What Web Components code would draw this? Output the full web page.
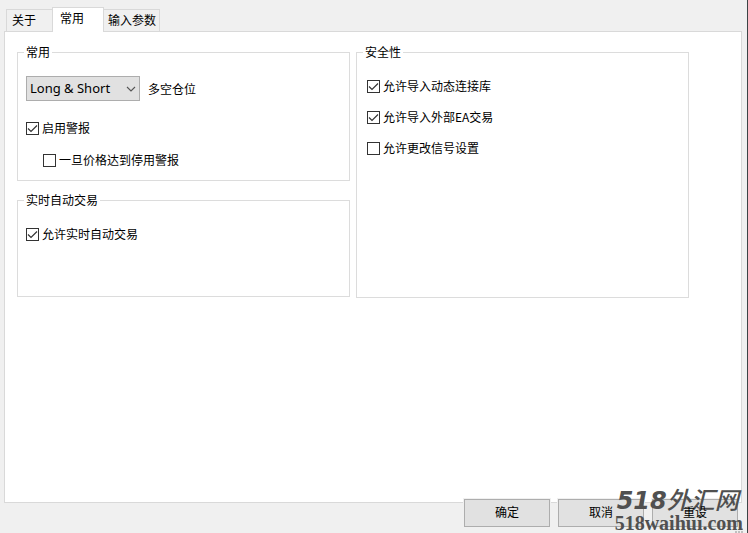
<!DOCTYPE html>
<html lang="zh-CN">
<head>
<meta charset="utf-8">
<title>EA</title>
<style>
  body {
    margin: 0;
    background: #f0f0f0;
    color: #000;
    font: 12px/16px "Noto Sans CJK SC", sans-serif;
  }
</style>
</head>
<body>
<ea-dialog>
  <tab-strip slot="tabs">
    <tab-item>关于</tab-item>
    <tab-item active>常用</tab-item>
    <tab-item>输入参数</tab-item>
  </tab-strip>

  <group-box slot="left" label="常用" class="common">
    <combo-box label="多空仓位" value="Long &amp; Short"></combo-box>
    <check-item checked>启用警报</check-item>
    <check-item nested>一旦价格达到停用警报</check-item>
  </group-box>
  <group-box slot="left" label="实时自动交易" class="live">
    <check-item checked>允许实时自动交易</check-item>
  </group-box>
  <group-box slot="right" label="安全性" class="safety">
    <check-item checked>允许导入动态连接库</check-item>
    <check-item checked>允许导入外部EA交易</check-item>
    <check-item>允许更改信号设置</check-item>
  </group-box>

  <push-button slot="buttons">确定</push-button>
  <push-button slot="buttons">取消</push-button>
  <push-button slot="buttons">重设</push-button>
  <site-mark slot="mark"></site-mark>
</ea-dialog>

<script>
// every element only fills its own open shadow root
class BaseElement extends HTMLElement {
  constructor() {
    super();
    this.attachShadow({ mode: "open" });
  }

  connectedCallback() {
    this.shadowRoot.innerHTML = this.template();
  }
}

class EaDialog extends BaseElement {
  template() {
    return `
      <style>
        :host {
          display: flex;
          flex-direction: column;
          position: relative;
          box-sizing: border-box;
          min-height: 100vh;
          border-right: 1px solid #3c4446;
        }
        main {
          flex: 1;
          display: grid;
          grid-template-columns: 1fr 1fr;
          align-items: start;
          gap: 6px;
          margin: 0 5px 0 4px;
          padding: 12px 52px 20px 12px;
          background: #fff;
          border: 1px solid #d9d9d9;
        }
        .col {
          display: flex;
          flex-direction: column;
          gap: 11px;
        }
        /* the buttons rise over the lower edge of the page */
        footer {
          display: flex;
          justify-content: flex-end;
          gap: 8px;
          margin-top: -4px;
          padding: 0 9px 6px;
        }
        .grip {
          position: absolute;
          right: 4px;
          bottom: 0;
        }
      </style>
      <slot name="tabs"></slot>
      <main>
        <div class="col"><slot name="left"></slot></div>
        <div class="col"><slot name="right"></slot></div>
      </main>
      <footer><slot name="buttons"></slot></footer>
      <svg class="grip" width="8" height="5" fill="#bfbfbf" aria-hidden="true">
        <path d="M6 0h2v2h-2zM3 3h2v2h-2zM6 3h2v2h-2zM0 3h2v2h-2z"/>
      </svg>
      <slot name="mark"></slot>
    `;
  }
}

class TabStrip extends BaseElement {
  template() {
    return `
      <style>
        :host {
          display: block;
          padding: 7px 6px 0;
        }
        div {
          display: flex;
          align-items: flex-end;
        }
      </style>
      <div role="tablist"><slot></slot></div>
    `;
  }
}

class TabItem extends BaseElement {
  template() {
    const active = this.hasAttribute("active");
    return `
      <style>
        :host { display: block; }
        :host([active]) { margin-bottom: -1px; }
        button {
          display: block;
          height: 22px;
          padding: 0 3px 2px 4px;
          border: 1px solid #d9d9d9;
          border-bottom: 0;
          background: #f0f0f0;
          color: inherit;
          font: inherit;
        }
        :host(:first-child) button {
          padding: 0 16px 2px 5px;
          border-right: 0;
        }
        :host(:last-child) button { border-left: 0; }
        :host([active]) button {
          position: relative;
          height: 25px;
          padding: 0 19px 4px 7px;
          background: #fff;
        }
      </style>
      <button type="button" role="tab" aria-selected="${active}"><slot></slot></button>
    `;
  }
}

class GroupBox extends BaseElement {
  template() {
    return `
      <style>
        :host { display: block; }
        fieldset {
          margin: 0;
          padding: 17px 8px 11px;
          border: 1px solid #dcdcdc;
          min-width: 0;
        }
        legend {
          margin-left: -2px;
          padding: 0 2px 2px;
          line-height: 15px;
        }
        .rows {
          display: flex;
          flex-direction: column;
          gap: 15px;
        }
        :host(.common) fieldset { padding-top: 15px; }
        :host(.live) .rows { min-height: 59px; }
        :host(.safety) .rows {
          gap: 14px;
          min-height: 208px;
          padding-left: 2px;
        }
      </style>
      <fieldset>
        <legend>${this.getAttribute("label")}</legend>
        <div class="rows"><slot></slot></div>
      </fieldset>
    `;
  }
}

class CheckItem extends BaseElement {
  template() {
    return `
      <style>
        :host { display: block; }
        :host([nested]) { padding-left: 17px; }
        label {
          display: flex;
          align-items: center;
          gap: 3px;
          height: 17px;
        }
        .box { display: grid; }
        .text {
          padding-bottom: 2px;
          line-height: 15px;
        }
        input, svg { grid-area: 1 / 1; }
        input {
          appearance: none;
          width: 13px;
          height: 13px;
          margin: 0;
          border: 1px solid #333;
          background: #fff;
        }
        svg {
          visibility: hidden;
          pointer-events: none;
        }
        input:checked + svg { visibility: visible; }
      </style>
      <label>
        <span class="box">
          <input type="checkbox" ${this.hasAttribute("checked") ? "checked" : ""}>
          <svg width="13" height="13" fill="none" stroke="#333" stroke-width="1.2" aria-hidden="true">
            <path d="M2 6.5L5 9.5L11 3.5"/>
          </svg>
        </span>
        <span class="text"><slot></slot></span>
      </label>
    `;
  }
}

class ComboBox extends BaseElement {
  template() {
    return `
      <style>
        :host {
          display: flex;
          align-items: center;
          gap: 8px;
          margin-bottom: 4px;
        }
        .field {
          display: grid;
          align-items: center;
        }
        select, svg { grid-area: 1 / 1; }
        select {
          appearance: none;
          width: 114px;
          height: 25px;
          margin: 0;
          padding: 0 20px 2px 3px;
          border: 1px solid #adadad;
          border-radius: 0;
          background: #e1e1e1;
          color: inherit;
          font: 13px/16px "Noto Sans", sans-serif;
        }
        svg {
          justify-self: end;
          margin-right: 4px;
          pointer-events: none;
        }
      </style>
      <span class="field">
        <select id="side"><option>${this.getAttribute("value").replace("&", "&amp;")}</option></select>
        <svg width="10" height="6" fill="none" stroke="#555" stroke-width="1.1" aria-hidden="true">
          <path d="M1 1L5 5L9 1"/>
        </svg>
      </span>
      <label for="side">${this.getAttribute("label")}</label>
    `;
  }
}

class PushButton extends BaseElement {
  template() {
    return `
      <style>
        :host { display: block; }
        button {
          display: block;
          width: 86px;
          height: 28px;
          padding: 0 0 2px;
          border: 1px solid #adadad;
          box-shadow: 0 0 0 1px #f0f0f0;
          background: #e1e1e1;
          color: inherit;
          font: inherit;
        }
        /* the caption stays readable over the site mark */
        span {
          position: relative;
          z-index: 2;
        }
      </style>
      <button type="button"><span><slot></slot></span></button>
    `;
  }
}

class SiteMark extends BaseElement {
  template() {
    return `
      <style>
        :host {
          position: absolute;
          z-index: 1;
          right: 4px;
          bottom: 0;
          color: #505050;
          white-space: nowrap;
          pointer-events: none;
        }
        .name {
          padding-left: 2px;
          font: italic bold 24px/24px "DejaVu Sans", "Noto Sans CJK SC", sans-serif;
        }
        .han { font-weight: 500; }
        .url { font: bold 20px/20px "Liberation Serif", serif; }
      </style>
      <div class="name">518<span class="han">外汇网</span></div>
      <div class="url">518waihui.com</div>
    `;
  }
}

customElements.define("tab-item", TabItem);
customElements.define("tab-strip", TabStrip);
customElements.define("check-item", CheckItem);
customElements.define("combo-box", ComboBox);
customElements.define("group-box", GroupBox);
customElements.define("push-button", PushButton);
customElements.define("site-mark", SiteMark);
customElements.define("ea-dialog", EaDialog);
</script>
</body>
</html>
